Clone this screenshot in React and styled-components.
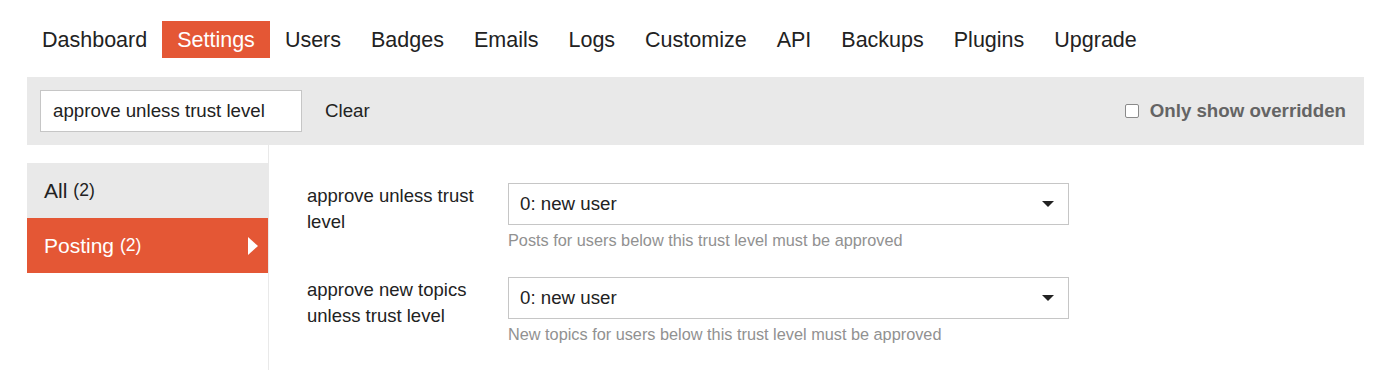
import React from 'react'
import styled, { createGlobalStyle } from 'styled-components'

const GlobalStyle = createGlobalStyle`
  body {
    margin: 0;
    background: #fff;
    font-family: "Liberation Sans", Arial, sans-serif;
    color: #222;
  }
`

const tabs = ['Dashboard', 'Settings', 'Users', 'Badges', 'Emails', 'Logs', 'Customize', 'API', 'Backups', 'Plugins', 'Upgrade']

const settings = [
  {
    label: 'approve unless trust level',
    value: '0: new user',
    help: 'Posts for users below this trust level must be approved',
  },
  {
    label: 'approve new topics unless trust level',
    value: '0: new user',
    help: 'New topics for users below this trust level must be approved',
  },
]

function App() {
  return (
    <Page>
      <GlobalStyle />
      <Nav>
        {tabs.map((t) => (
          <Tab key={t} $active={t === 'Settings'}>{t}</Tab>
        ))}
      </Nav>

      <FilterBar>
        <SearchInput defaultValue="approve unless trust level" />
        <ClearButton>Clear</ClearButton>
        <Overridden>
          <Check />
          Only show overridden
        </Overridden>
      </FilterBar>

      <Body>
        <Sidebar>
          <Category>
            All <Count>(2)</Count>
          </Category>
          <Category $active>
            Posting <Count>(2)</Count>
            <svg width="10" height="18" viewBox="0 0 10 18">
              <path d="M0 0 L10 9 L0 18 Z" fill="#fff" />
            </svg>
          </Category>
        </Sidebar>

        <Content>
          {settings.map((s) => (
            <SettingRow key={s.label}>
              <Label>{s.label}</Label>
              <Field>
                <Select>
                  {s.value}
                  <svg width="12" height="6" viewBox="0 0 12 6">
                    <path d="M0 0 L12 0 L6 6 Z" fill="#222" />
                  </svg>
                </Select>
                <Help>{s.help}</Help>
              </Field>
            </SettingRow>
          ))}
        </Content>
      </Body>
    </Page>
  )
}

const Page = styled.div`
  padding: 21px 17px 0 27px;
`

const Nav = styled.nav`
  display: flex;
  margin-bottom: 19px;
`

const Tab = styled.a`
  display: block;
  box-sizing: border-box;
  padding: 2px 15px 0;
  height: 37px;
  line-height: 35px;
  font-size: 21.5px;
  color: ${(p) => (p.$active ? '#fff' : '#222')};
  background: ${(p) => (p.$active ? '#e45735' : 'transparent')};
`

const FilterBar = styled.div`
  display: flex;
  align-items: center;
  height: 68px;
  padding: 0 18px 0 13px;
  background: #e9e9e9;
`

const SearchInput = styled.input`
  box-sizing: border-box;
  width: 262px;
  height: 42px;
  padding: 0 12px;
  border: 1px solid #c6c6c6;
  background: #fff;
  font-family: inherit;
  font-size: 18.7px;
  color: #222;
  outline: none;
`

const ClearButton = styled.span`
  margin-left: 23px;
  font-size: 18.7px;
  color: #222;
`

const Overridden = styled.label`
  margin-left: auto;
  display: flex;
  align-items: center;
  gap: 11px;
  font-size: 18.7px;
  font-weight: bold;
  color: #646464;
`

const Check = styled.span`
  box-sizing: border-box;
  width: 14px;
  height: 14px;
  border: 1px solid #8a8a8a;
  border-radius: 2px;
  background: #fff;
`

const Body = styled.div`
  display: flex;
`

const Sidebar = styled.div`
  width: 241px;
  min-height: 225px;
  padding-top: 18px;
  border-right: 1px solid #e9e9e9;
`

const Category = styled.div`
  display: flex;
  align-items: center;
  height: 55px;
  padding: 0 10px 0 17px;
  font-size: 21px;
  color: ${(p) => (p.$active ? '#fff' : '#222')};
  background: ${(p) => (p.$active ? '#e45735' : '#e9e9e9')};

  svg {
    margin-left: auto;
  }
`

const Count = styled.span`
  margin-left: 6px;
  font-size: 17.5px;
`

const Content = styled.div`
  flex: 1;
  padding: 38px 0 0 38px;
  display: flex;
  flex-direction: column;
  gap: 28px;
`

const SettingRow = styled.div`
  display: flex;
`

const Label = styled.div`
  width: 185px;
  padding-right: 16px;
  font-size: 18.5px;
  line-height: 26px;
  color: #222;
`

const Field = styled.div`
  display: flex;
  flex-direction: column;
`

const Select = styled.div`
  box-sizing: border-box;
  width: 561px;
  height: 42px;
  display: flex;
  align-items: center;
  justify-content: space-between;
  padding: 0 14px 0 11px;
  border: 1px solid #c6c6c6;
  font-size: 18.7px;
  color: #222;
`

const Help = styled.div`
  margin-top: 6px;
  font-size: 16.3px;
  line-height: 18px;
  color: #919191;
`

export default App
